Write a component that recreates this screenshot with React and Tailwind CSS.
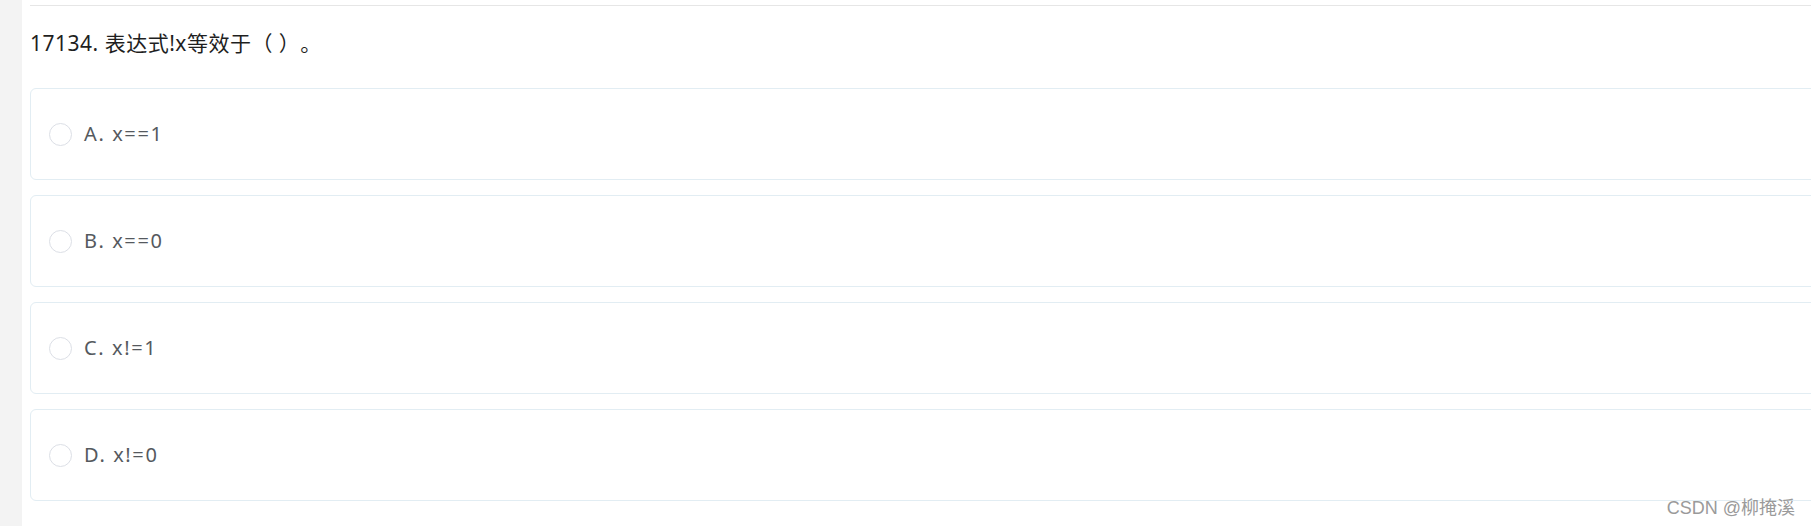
import React from "react";

const options = [
  { key: "A", text: "x==1" },
  { key: "B", text: "x==0" },
  { key: "C", text: "x!=1" },
  { key: "D", text: "x!=0" },
];

export default function App() {
  return (
    <div
      className="relative flex h-[526px] w-[1811px] overflow-hidden bg-white [text-spacing-trim:space-all]"
      style={{ fontFamily: '"Noto Sans", "Noto Sans CJK SC", sans-serif' }}
    >
      <div className="h-full w-[22px] shrink-0 bg-[#f3f3f3]" />
      <div className="w-[1840px] shrink-0 pl-[8px] pt-[5px]">
        <div className="border-t border-[#e6e6e6]" />
        <div className="mt-[23px] h-[28px] text-[21px] leading-[28px] tracking-[0.5px] text-[#1f1f1f]">
          17134. 表达式!x等效于（ ）。
        </div>
        <div className="mt-[31px] flex flex-col gap-[15px]">
          {options.map((o) => (
            <div
              key={o.key}
              className="flex h-[92px] items-center rounded-[6px] border border-[#e2edf3] pl-[18px]"
            >
              <span className="h-[23px] w-[23px] shrink-0 rounded-full border border-[#dcdfe6] bg-white" />
              <span className="ml-[12px] text-[20px] leading-[24px] tracking-[1.6px] text-[#55595e]">
                {o.key}.{" "}{o.text}
              </span>
            </div>
          ))}
        </div>
      </div>
      <div
        className="absolute bottom-[7px] right-[16px] text-[18px] leading-[22px] text-[#9a9a9a]"
        style={{ fontFamily: '"Liberation Sans", "Noto Sans CJK SC", sans-serif' }}
      >
        CSDN @柳掩溪
      </div>
    </div>
  );
}
